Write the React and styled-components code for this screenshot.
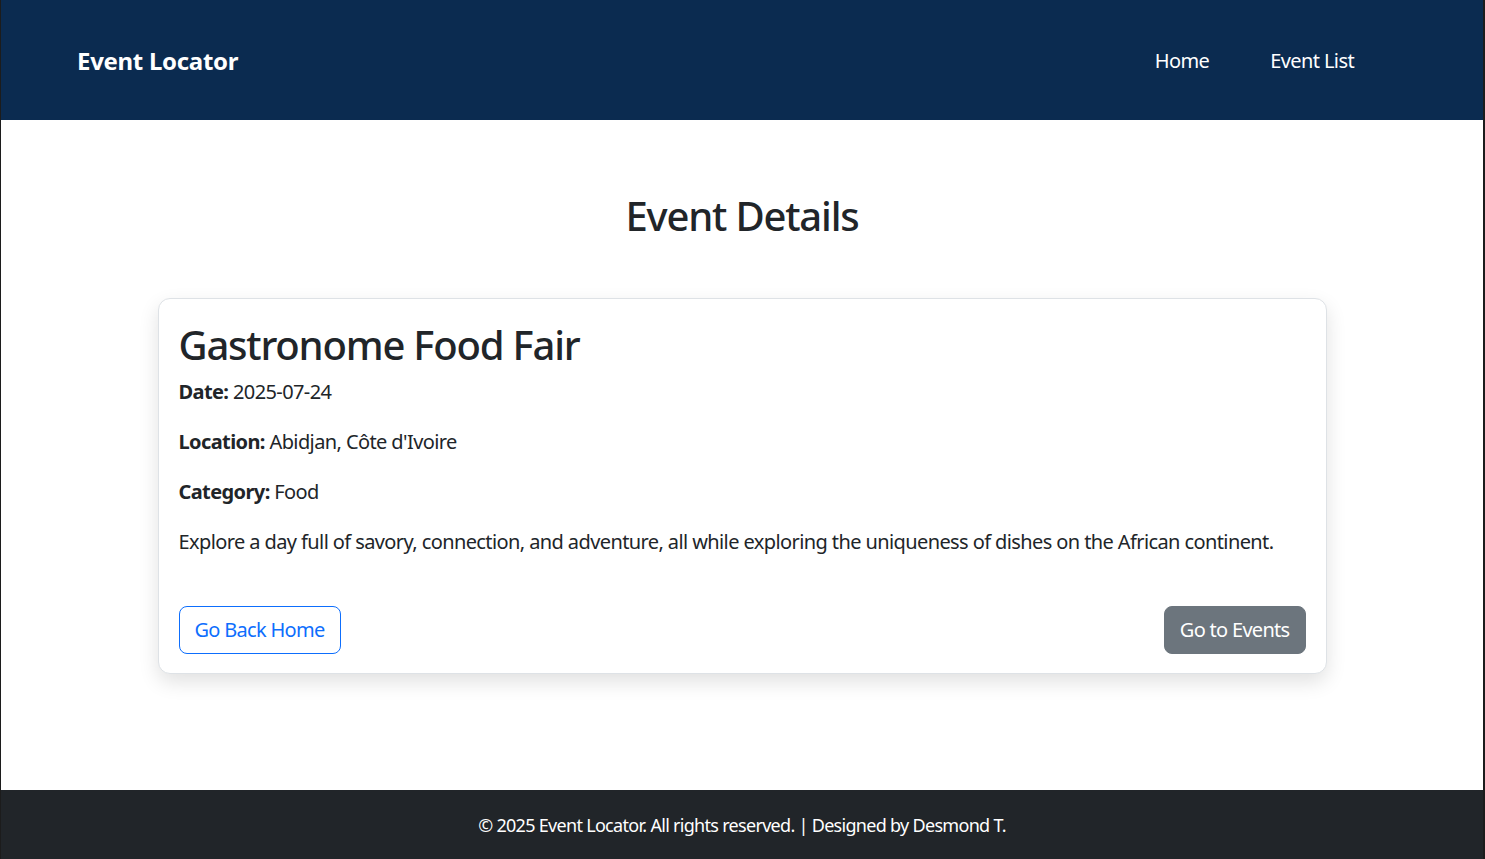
import React from "react";
import styled, { createGlobalStyle } from "styled-components";

const GlobalStyle = createGlobalStyle`
  html, body { margin: 0; padding: 0; }
  body {
    background: #1c1c1c;
    font-family: "Noto Sans", "Liberation Sans", sans-serif;
    color: #212529;
  }
  * { box-sizing: border-box; }
`;

const Page = styled.div`
  margin: 0 2px 0 1px;
  min-height: 859px;
  display: flex;
  flex-direction: column;
  background: #fff;
`;

const NavBar = styled.header`
  height: 120px;
  background: #0b2b50;
  display: flex;
  align-items: center;
  justify-content: space-between;
  padding: 0 129px 0 76px;
`;

const Brand = styled.a`
  color: #fff;
  font-size: 24px;
  font-weight: 700;
  text-decoration: none;
  letter-spacing: -0.3px;
`;

const NavList = styled.nav`
  display: flex;
  gap: 61px;
`;

const NavLink = styled.a`
  color: #fff;
  font-size: 20px;
  letter-spacing: -0.6px;
  text-decoration: none;
`;

const Main = styled.main`
  flex: 1;
  display: flex;
  flex-direction: column;
  align-items: center;
  padding: 72px 0 100px;
`;

const PageTitle = styled.h1`
  margin: 0 0 58px;
  font-size: 40px;
  font-weight: 500;
  line-height: 1.2;
  letter-spacing: -1.2px;
`;

const Card = styled.section`
  width: 1169px;
  border: 1px solid #dee2e6;
  border-radius: 12px;
  background: #fff;
  box-shadow: 0 8px 20px rgba(0, 0, 0, 0.12);
  padding: 22px 20px 19px;
`;

const CardTitle = styled.h2`
  margin: 0 0 8px;
  font-size: 40px;
  font-weight: 500;
  line-height: 1.2;
  letter-spacing: -1.2px;
`;

const Text = styled.p`
  margin: 0 0 20px;
  font-size: 20px;
  line-height: 30px;
  letter-spacing: -0.6px;
`;

const Actions = styled.div`
  display: flex;
  justify-content: space-between;
  margin-top: 49px;
`;

const Button = styled.a`
  display: inline-block;
  font-size: 20px;
  line-height: 30px;
  letter-spacing: -0.7px;
  padding: 8px 15px;
  border-radius: 8px;
  border: 1px solid ${(p) => (p.$variant === "outline" ? "#0d6efd" : "#6c757d")};
  background: ${(p) => (p.$variant === "outline" ? "transparent" : "#6c757d")};
  color: ${(p) => (p.$variant === "outline" ? "#0d6efd" : "#fff")};
  text-decoration: none;
  cursor: pointer;
`;

const Footer = styled.footer`
  height: 69px;
  background: #212529;
  color: #fff;
  display: flex;
  align-items: center;
  justify-content: center;
  font-size: 18px;
  letter-spacing: -0.7px;
`;

export default function App() {
  return (
    <>
      <GlobalStyle />
      <Page>
        <NavBar>
          <Brand href="#">Event Locator</Brand>
          <NavList>
            <NavLink href="#">Home</NavLink>
            <NavLink href="#">Event List</NavLink>
          </NavList>
        </NavBar>
        <Main>
          <PageTitle>Event Details</PageTitle>
          <Card>
            <CardTitle>Gastronome Food Fair</CardTitle>
            <Text><strong>Date:</strong> 2025-07-24</Text>
            <Text><strong>Location:</strong> Abidjan, Côte d'Ivoire</Text>
            <Text><strong>Category:</strong> Food</Text>
            <Text>
              Explore a day full of savory, connection, and adventure, all while exploring the uniqueness of dishes on the African continent.
            </Text>
            <Actions>
              <Button $variant="outline" href="#">Go Back Home</Button>
              <Button $variant="secondary" href="#">Go to Events</Button>
            </Actions>
          </Card>
        </Main>
        <Footer>© 2025 Event Locator. All rights reserved. | Designed by Desmond T.</Footer>
      </Page>
    </>
  );
}
